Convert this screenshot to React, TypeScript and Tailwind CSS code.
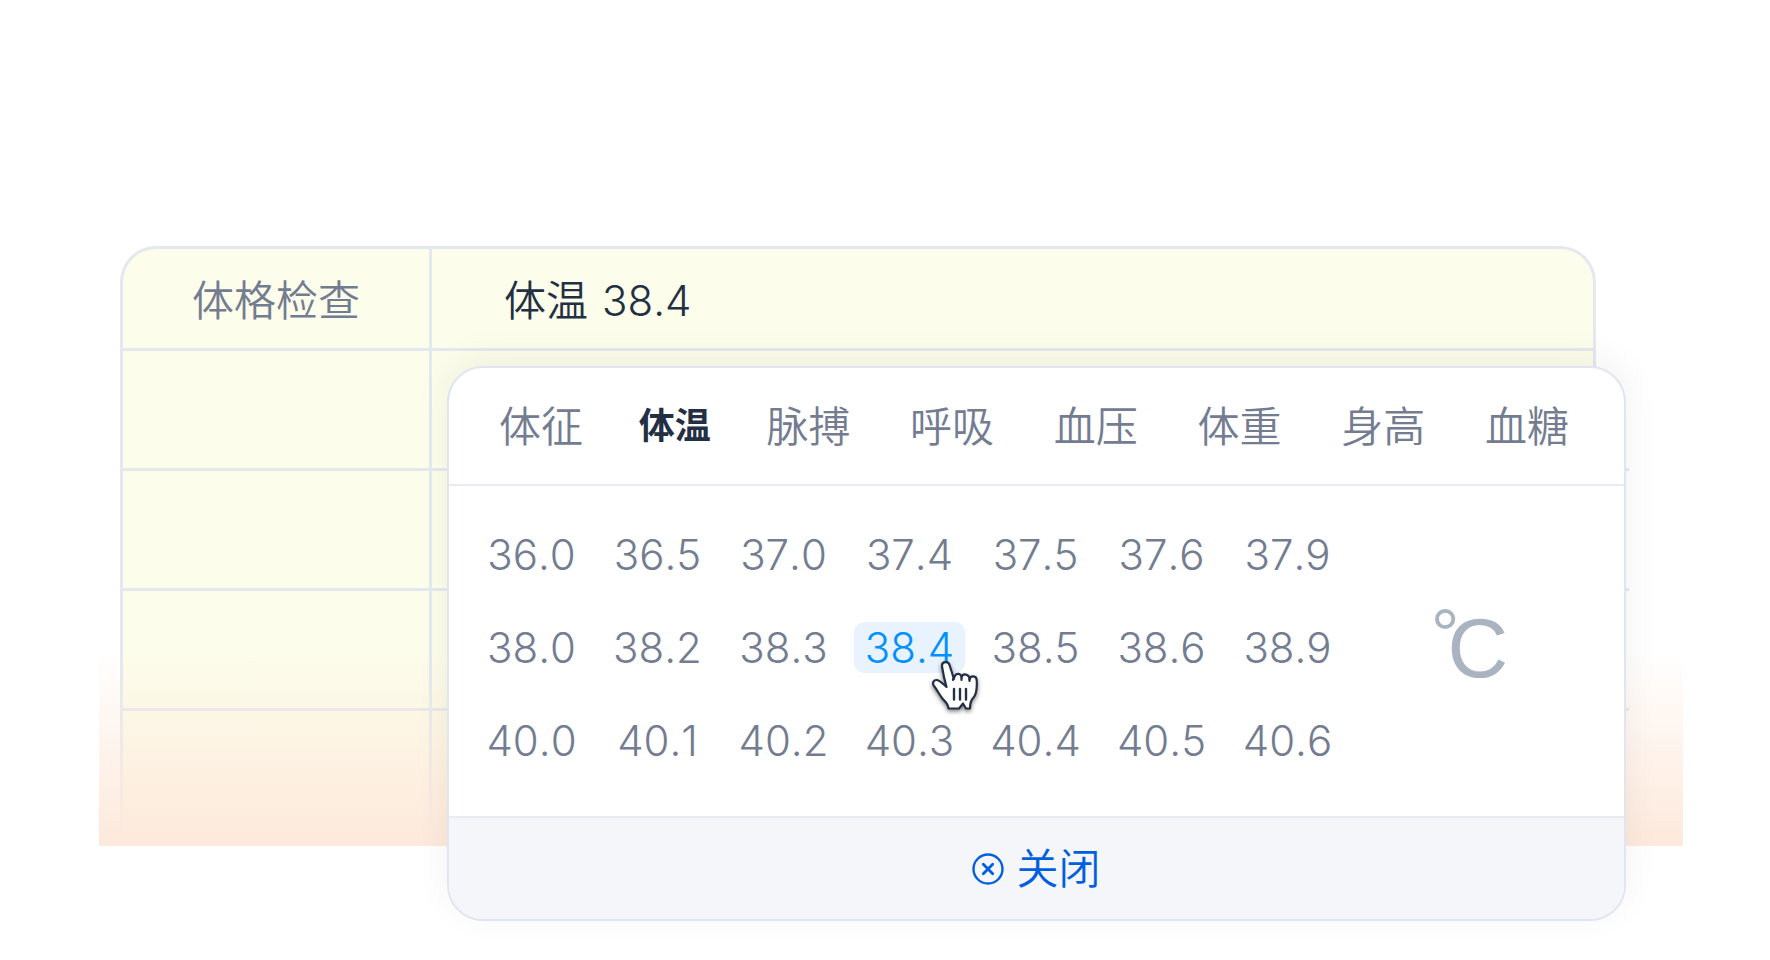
import { useState } from 'react'

const tabs = ['体征', '体温', '脉搏', '呼吸', '血压', '体重', '身高', '血糖']

const values = [
  '36.0', '36.5', '37.0', '37.4', '37.5', '37.6', '37.9',
  '38.0', '38.2', '38.3', '38.4', '38.5', '38.6', '38.9',
  '40.0', '40.1', '40.2', '40.3', '40.4', '40.5', '40.6',
]

function CloseIcon() {
  return (
    <svg className="size-8" viewBox="0 0 32 32" fill="none" stroke="currentColor" strokeLinecap="round">
      <circle cx="16" cy="16" r="14.5" strokeWidth="2.4" />
      <path d="M11.3 11.3l9.4 9.4M20.7 11.3l-9.4 9.4" strokeWidth="2.8" />
    </svg>
  )
}

function HandCursor() {
  return (
    <svg
      className="pointer-events-none absolute top-[38px] left-[77px] z-10 h-[52px] w-12 drop-shadow-[0_2px_2px_rgba(0,0,0,0.5)]"
      viewBox="0 0 48 52"
      fill="none"
      stroke="#232f42"
      strokeWidth="2.2"
      strokeLinejoin="round"
      strokeLinecap="round"
    >
      <path
        fill="#fff"
        d="M15.500 27 C12 24 9 20.500 6 20 C2.500 19.800 1 23 3 26 C6 29.500 8 34 11 38 C13.500 41.500 17.500 43.500 17.500 48.500 L28 48.500 L32 43.500 L35 48.500 L39 48.500 C39 43 40.500 39.500 42.500 37.500 C45.500 34 46 25 45.700 20 C45.400 15.500 39.500 15 38.500 19.500 C38.500 13.500 31.500 13 30.500 17.500 C30 12.500 24 12.500 22.800 19 C21.500 14 20 9.500 18.500 5 C17 .5 10.500 1.500 11 6.500 C12 13 13.500 20 15.500 27 Z"
      />
      <path d="M22 20v-1M30.500 20v-2M38.500 21v-2" />
      <path strokeWidth="2.4" d="M23 29v10.500M29 29v10.500M35 29v10.500" />
    </svg>
  )
}

export default function App() {
  const [tab, setTab] = useState('体温')
  const [value, setValue] = useState('38.4')

  return (
    <main className="min-h-screen overflow-hidden bg-white pt-[246px] pr-[87px] pb-10 pl-[99px] font-[Inter,'Noto_Sans_CJK_SC',sans-serif] text-[42px] leading-[51px] font-[350] text-[#737c90] [font-kerning:none]">
      <section className="relative h-[600px] w-full">
        <div className="pr-[87px] pl-[21px]">
          <table className="w-full table-fixed border-separate border-spacing-0 overflow-hidden rounded-t-[36px] border-[3px] border-b-0 border-[#e4e8ef] bg-[#fcfdea]">
            <tbody>
              <tr className="h-[102px]">
                <th scope="row" className="w-[309px] border-r-[3px] border-b-[3px] border-[#e4e8ef] pt-1 text-center font-[350]">
                  体格检查
                </th>
                <td className="border-b-[3px] border-[#e4e8ef] pt-1 pl-[72px] text-[#232f42]">
                  <div className="flex gap-3.5">
                    <span>体温</span>
                    <span>{value}</span>
                  </div>
                </td>
              </tr>
              {[1, 2, 3].map((row) => (
                <tr key={row} className="h-[120px]">
                  <td className="border-r-[3px] border-b-[3px] border-[#e4e8ef]" />
                  <td className="border-b-[3px] border-[#e4e8ef]" />
                </tr>
              ))}
              <tr className="h-[135px]">
                <td className="border-r-[3px] border-[#e4e8ef]" />
                <td />
              </tr>
            </tbody>
          </table>
        </div>

        {/* row lines running past the table edge */}
        <div className="absolute top-[222px] right-[54px] flex w-10 flex-col gap-[117px]">
          <span className="h-[3px] bg-[#e4e8ef]" />
          <span className="h-[3px] bg-[#e4e8ef]" />
          <span className="h-[3px] bg-[#e4e8ef]" />
        </div>

        {/* bottom fade */}
        <div className="absolute inset-x-0 bottom-0 h-[195px] bg-linear-to-b from-[#fdeadd]/0 to-[#fdeadd] to-95%" />

        {/* value picker */}
        <div
          role="dialog"
          aria-label={tab}
          className="absolute top-[120px] right-[57px] left-[348px] rounded-[36px] border-2 border-[#e0e5ef] bg-white shadow-[0_-8px_36px_rgba(0,0,0,0.06)]"
        >
          <div role="tablist" className="flex h-[118px] items-center justify-between border-b-2 border-[#e8ebf1] pr-[55px] pl-[50px]">
            {tabs.map((name) => (
              <button
                key={name}
                role="tab"
                aria-selected={name === tab}
                onClick={() => setTab(name)}
                className={name === tab ? '-mx-1 text-[36px] font-bold text-[#232f42]' : ''}
              >
                {name}
              </button>
            ))}
          </div>

          <div className="flex items-center pt-[43px] pb-[50px] pl-[27px]">
            <div className="grid grid-cols-7 gap-x-[15px] gap-y-[42px]">
              {values.map((v) => (
                <div key={v} className="relative">
                  <button
                    onClick={() => setValue(v)}
                    className={
                      v === value
                        ? 'w-[111px] rounded-[10px] bg-[#e9f2ff] text-[#0091ff]'
                        : 'w-[111px]'
                    }
                  >
                    {v}
                  </button>
                  {v === value && <HandCursor />}
                </div>
              ))}
            </div>
            <div className="flex flex-1 items-start justify-center pr-7 pb-2 font-['Liberation_Sans',sans-serif] text-[#a9b4c0]">
              <span className="-mr-3 text-[72px] leading-none">°</span>
              <span className="mt-2 text-[84px] leading-none">C</span>
            </div>
          </div>

          <button className="flex h-[103px] w-full items-center justify-center gap-3 rounded-b-[34px] border-t-2 border-[#e8ebf1] bg-[#f5f6fa] text-[#005fe0]">
            <CloseIcon />
            关闭
          </button>
        </div>
      </section>
    </main>
  )
}
